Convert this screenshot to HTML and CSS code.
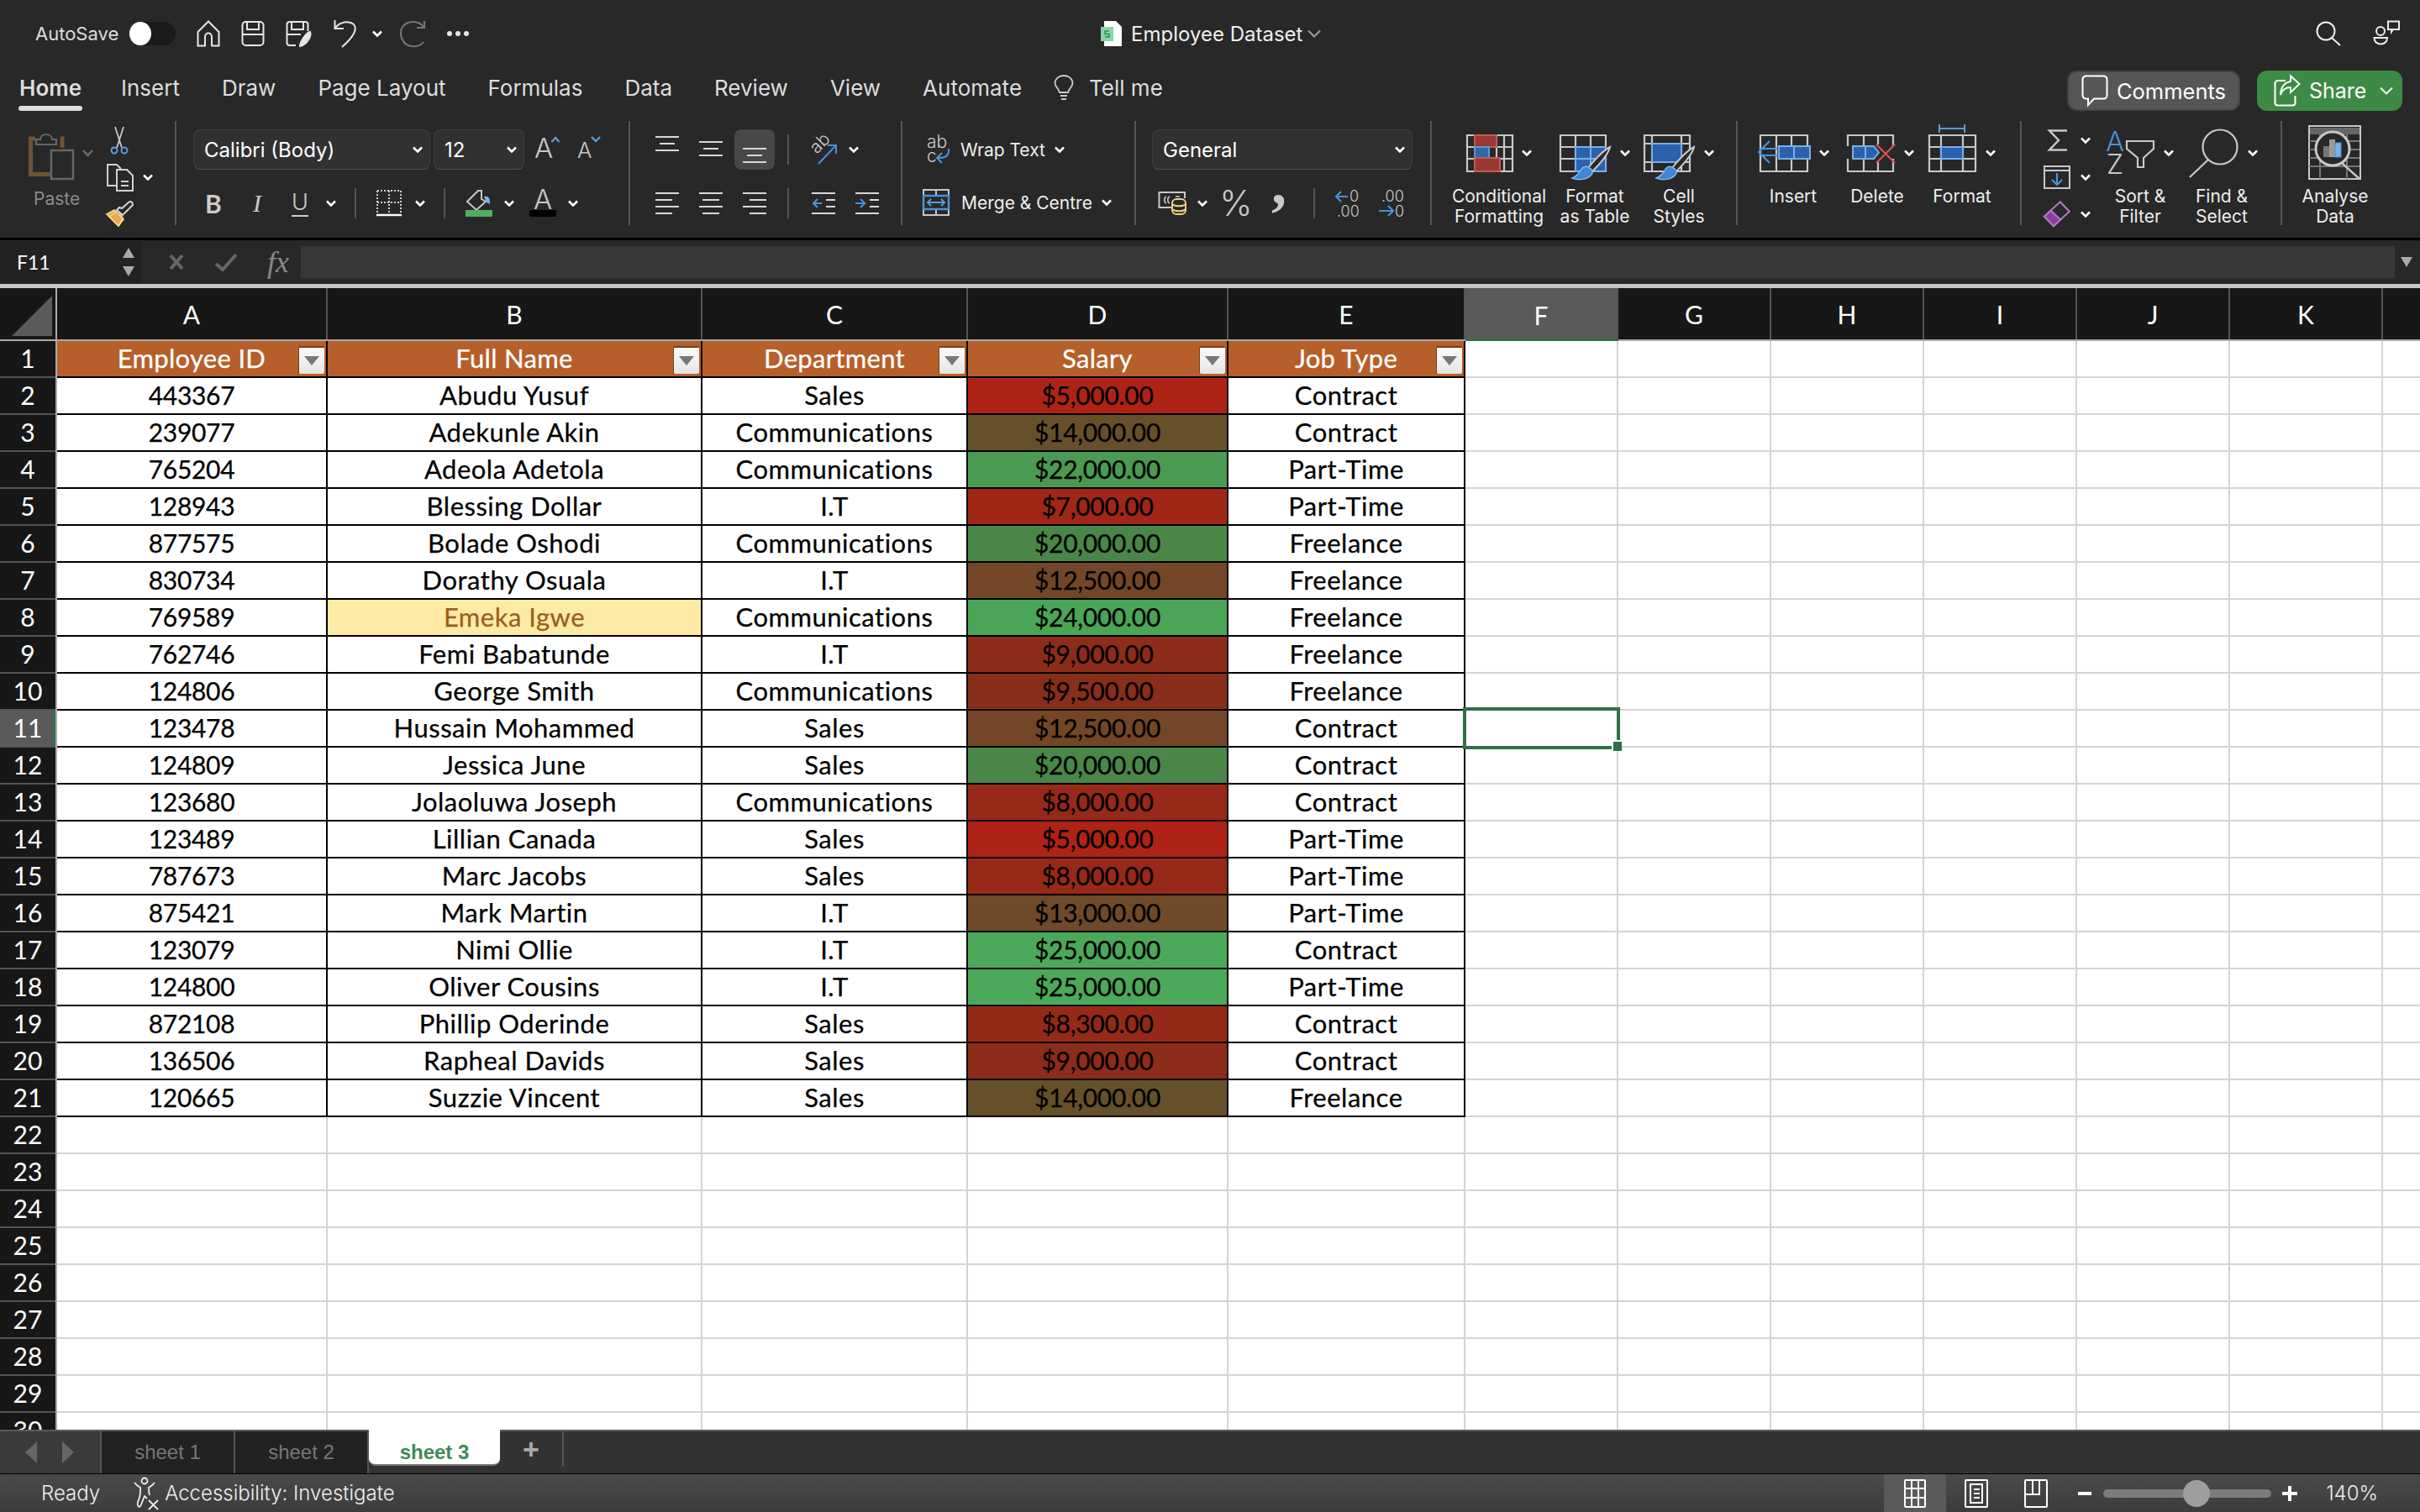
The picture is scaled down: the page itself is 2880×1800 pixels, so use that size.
FILE: index.html
```html
<!DOCTYPE html>
<html lang="en">
<head>
  <meta charset="UTF-8" />
  <title>Employee Dataset</title>
  <link rel="stylesheet" href="styles.css">
</head>
<body>
  <svg class="defs" width="0" height="0">
    <symbol id="chev" viewBox="0 0 12 8"><path d="M1 1.5 6 6.5 11 1.5" fill="none" stroke="#fff" stroke-width="2.6"/></symbol>
    <symbol id="brush" viewBox="0 0 62 72">
      <path d="M60 29C52 33 40 46 34 54L39 58C47 50 58 38 60 29Z" fill="#282828" stroke="#c8c8c8" stroke-width="2"/>
      <path d="M34 53C38 55 41 58 38 62 33 68 22 69 15 66 21 64 23 60 25 57 27 53 31 51 34 53Z" fill="#3f86d4" stroke="#7ab6ee" stroke-width="1.5"/>
    </symbol>
  </svg>

  <!-- title bar -->
  <header class="titlebar">
    <div class="qat">
      <span class="autosave">AutoSave</span>
      <span class="toggle"><span class="knob"></span></span>
      <svg width="28" height="32" viewBox="0 0 28 32" fill="none" stroke="#e6e6e6" stroke-width="2"><path d="M1.5 14 14 1.5 26.500 14V30.500H18V20C18 14 10 14 10 20V30.500H1.500Z"/></svg>
      <svg width="28" height="32" viewBox="0 0 28 32" fill="none" stroke="#e6e6e6" stroke-width="2"><rect x="1.500" y="2" width="25" height="28" rx="4"/><path d="M7 2V11H21V2M1.500 17H26.500"/></svg>
      <svg width="32" height="32" viewBox="0 0 32 32" fill="none" stroke="#e6e6e6" stroke-width="2"><path d="M12 30H5C3 30 1.500 29 1.500 27V5C1.500 3 3 2 5 2H23C25 2 26.500 3 26.500 5V13M7 2V11H21V2M1.500 17H18"/><path d="M17 31C17 26 24 15 29 14 31 18 26 29 17 31Z" fill="#e6e6e6"/></svg>
      <svg width="29" height="34" viewBox="0 0 29 34" fill="none" stroke="#e6e6e6" stroke-width="2"><path d="M1.500 1V11H12M2 10C8 3 18 1 24 6 28 11 26 19 10 33"/></svg>
      <svg class="chev undo-chev" width="12" height="8"><use href="#chev"/></svg>
      <svg class="redo" width="32" height="34" viewBox="0 0 32 34" fill="none" stroke="#777" stroke-width="2"><path d="M30 2V10H21M29 9C23 1 10 1 4 9-1 18 4 31 15 32 20 32.500 26 31 29 27"/></svg>
      <svg class="dots" width="26" height="8" viewBox="0 0 26 8" fill="#e6e6e6"><circle cx="3" cy="4" r="3"/><circle cx="13" cy="4" r="3"/><circle cx="23" cy="4" r="3"/></svg>
    </div>
    <div class="doc">
      <svg width="26" height="30" viewBox="0 0 26 30"><path d="M4 0H18L25 7V30H4Z" fill="#fff"/><rect y="7" width="15" height="17" fill="#86d6a6"/><path d="M10 12H5V15.500H10V19H5" fill="none" stroke="#2f8f5a" stroke-width="1.500"/></svg>
      <span class="doc-name">Employee Dataset</span>
      <svg width="16" height="10" viewBox="0 0 16 10"><path d="M1 1.500 8 8.500 15 1.500" fill="none" stroke="#999" stroke-width="2.200"/></svg>
    </div>
    <div class="title-right">
      <svg width="30" height="30" viewBox="0 0 30 30" fill="none" stroke="#eee" stroke-width="2"><circle cx="12" cy="12" r="10.500"/><path d="M19 20 29 29"/></svg>
      <svg width="32" height="32" viewBox="0 0 32 32" fill="none" stroke="#eee" stroke-width="2"><circle cx="9" cy="13" r="5"/><path d="M1.500 21H17C17 31 1.500 31 1.500 21Z"/><path d="M18 1.500H31V11H24L22 14V11H18Z"/></svg>
    </div>
  </header>

  <!-- ribbon tabs -->
  <nav class="tabs">
    <span class="tab active">Home</span>
    <span class="tab">Insert</span>
    <span class="tab">Draw</span>
    <span class="tab">Page Layout</span>
    <span class="tab">Formulas</span>
    <span class="tab">Data</span>
    <span class="tab">Review</span>
    <span class="tab">View</span>
    <span class="tab">Automate</span>
    <svg class="bulb" width="24" height="32" viewBox="0 0 24 32" fill="none" stroke="#ccc" stroke-width="1.800"><path d="M7 21C5 15 1.500 14 1.500 10 1.500 5 6 1 12 1S22.500 5 22.500 10C22.500 14 19 15 17 21ZM8 25H16M9 29H15"/></svg>
    <span class="tab tell">Tell me</span>
    <button class="btn comments">
      <svg width="32" height="38" viewBox="0 0 32 38" fill="none" stroke="#fff" stroke-width="2"><path d="M6 1.500H26C29 1.500 30.500 3 30.500 6V24C30.500 27 29 28.500 26 28.500H15L8 36V28.500H6C3 28.500 1.500 27 1.500 24V6C1.500 3 3 1.500 6 1.500Z"/></svg>
      Comments
    </button>
    <button class="btn share">
      <svg width="32" height="38" viewBox="0 0 32 38" fill="none" stroke="#fff" stroke-width="2"><path d="M14 7H5C3 7 1.500 8.500 1.500 10V33C1.500 35 3 36.500 5 36.500H22C24 36.500 25.500 35 25.500 33V25"/><path d="M20 1.500 30.500 11 20 21V15C14 15 10 18 8 24 8 15 13 9 20 8Z"/></svg>
      Share
      <svg class="share-chev" width="16" height="10" viewBox="0 0 16 10"><path d="M1 1.500 8 8.500 15 1.500" fill="none" stroke="#fff" stroke-width="1.800"/></svg>
    </button>
  </nav>

  <!-- ribbon -->
  <section class="ribbon">
    <div class="group clipboard">
      <div class="paste">
        <svg width="118" height="62" viewBox="0 0 118 62" fill="none">
          <path d="M42 11H36.500V53.500H60M72 11H74V22" stroke="#6e5434" stroke-width="5"/>
          <path d="M43 18V12H48C48 4 62 4 62 12H67V18Z" stroke="#666" stroke-width="2.200" fill="#282828"/>
          <rect x="61" y="25" width="26" height="34" stroke="#666" stroke-width="2.500"/>
          <path d="M99 25 104.500 31 110 25" stroke="#666" stroke-width="2.600"/>
        </svg>
        <span class="paste-label">Paste</span>
      </div>
      <div class="stack clip-stack">
        <div class="stack-row">
          <svg class="scissors" width="22" height="34" viewBox="0 0 22 34" fill="none"><path d="M6 1 14 26M16 1 8 26" stroke="#c8c8c8" stroke-width="1.800"/><circle cx="5" cy="29" r="3.500" stroke="#5a9bd8" stroke-width="2"/><circle cx="17" cy="29" r="3.500" stroke="#5a9bd8" stroke-width="2"/></svg>
        </div>
        <div class="stack-row">
          <svg width="34" height="34" viewBox="0 0 34 34" fill="none" stroke="#d0d0d0" stroke-width="2"><path d="M12 27H2V2H13L18 7"/><path d="M13 8H25L32 15V33H13ZM18 22H27M18 27H27" /></svg>
          <svg class="chev" width="12" height="8"><use href="#chev"/></svg>
        </div>
        <div class="stack-row">
          <svg width="34" height="32" viewBox="0 0 34 32"><path d="M1 16 15 30 21 22 10 11Z" fill="#e9a94a" stroke="#f3d48c" stroke-width="1.600"/><path d="M4 19 14 12 20 20 15 30Z" fill="none" stroke="#f3d48c" stroke-width="1.500"/><path d="M13 11 20 17 26 11 32 5C32 1 29 0 27 2L19 9 16 8Z" fill="#282828" stroke="#d0d0d0" stroke-width="2"/></svg>
        </div>
      </div>
    </div>

    <div class="group">
      <div class="row font-top">
        <div class="select font-name"><span>Calibri (Body)</span><svg class="chev" width="12" height="8"><use href="#chev"/></svg></div>
        <div class="select font-size"><span>12</span><svg class="chev" width="12" height="8"><use href="#chev"/></svg></div>
        <svg width="36" height="36" viewBox="0 0 36 36"><text x="4" y="28" class="ico-text big-a">A</text><path d="M24.500 9 29 4 33.500 9" fill="none" stroke="#5a9bd8" stroke-width="2.400"/></svg>
        <svg width="36" height="36" viewBox="0 0 36 36"><text x="4" y="28" class="ico-text small-a">A</text><path d="M21 3 26 8 31 3" fill="none" stroke="#5a9bd8" stroke-width="2.400"/></svg>
      </div>
      <div class="row font-bottom">
        <span class="ico-b">B</span>
        <span class="ico-i">I</span>
        <span class="ico-u">U</span>
        <svg class="chev" width="12" height="8"><use href="#chev"/></svg>
        <span class="vsep"></span>
        <svg width="30" height="32" viewBox="0 0 30 32" fill="none" stroke="#d0d0d0" stroke-width="2"><path d="M1 1H29V29M1 1V29M15 1V29M1 15H29" stroke-dasharray="2 2"/><path d="M0 30H30" stroke="#fff" stroke-width="2.500" /></svg>
        <svg class="chev" width="12" height="8"><use href="#chev"/></svg>
        <span class="vsep"></span>
        <svg width="32" height="32" viewBox="0 0 32 32"><path d="M2 14 13 3 15 1H19V11L24 14 13 24Z" fill="none" stroke="#c8c8c8" stroke-width="2"/><path d="M22 8C27 7 29 9 29 17L25 15Z" fill="#7ab6ee"/><rect y="24" width="32" height="8" fill="#4fae5f"/></svg>
        <svg class="chev" width="12" height="8"><use href="#chev"/></svg>
        <svg width="32" height="32" viewBox="0 0 32 32"><text x="5" y="23" class="ico-text big-a">A</text><rect y="24" width="32" height="8" fill="#000"/></svg>
        <svg class="chev" width="12" height="8"><use href="#chev"/></svg>
      </div>
    </div>

    <div class="group">
      <div class="row align-top">
        <svg width="28" height="36" viewBox="0 0 28 36" class="lines"><path d="M0 3H28M5 11H23M0 19H28"/></svg>
        <svg width="28" height="36" viewBox="0 0 28 36" class="lines"><path d="M0 9H28M5 17H23M0 25H28"/></svg>
        <span class="pressed"><svg width="28" height="36" viewBox="0 0 28 36" class="lines"><path d="M0 17H28M5 25H23M0 33H28"/></svg></span>
        <span class="vsep"></span>
        <svg width="34" height="36" viewBox="0 0 34 36"><text x="0" y="0" class="ico-text rot-ab" transform="translate(9 24) rotate(-45)">ab</text><path d="M11 35 32 13M22 13H32V23" fill="none" stroke="#4a90d9" stroke-width="2"/></svg>
        <svg class="chev" width="12" height="8"><use href="#chev"/></svg>
      </div>
      <div class="row align-bottom">
        <svg width="28" height="34" viewBox="0 0 28 34" class="lines"><path d="M0 5H28M0 13H20M0 21H28M0 29H20"/></svg>
        <svg width="28" height="34" viewBox="0 0 28 34" class="lines"><path d="M0 5H28M4 13H24M0 21H28M4 29H24"/></svg>
        <svg width="28" height="34" viewBox="0 0 28 34" class="lines"><path d="M0 5H28M8 13H28M0 21H28M8 29H28"/></svg>
        <span class="vsep"></span>
        <svg width="28" height="34" viewBox="0 0 28 34"><path class="stroke-lines" d="M0 5H28M17 13H28M17 21H28M0 29H28"/><path d="M12 17H2M7 12 2 17 7 22" fill="none" stroke="#4a90d9" stroke-width="2.200"/></svg>
        <svg width="28" height="34" viewBox="0 0 28 34"><path class="stroke-lines" d="M0 5H28M17 13H28M17 21H28M0 29H28"/><path d="M0 17H11M6 12 11 17 6 22" fill="none" stroke="#4a90d9" stroke-width="2.200"/></svg>
      </div>
    </div>

    <div class="group">
      <div class="row wrap-row">
        <svg class="wrap-ico" width="28" height="36" viewBox="0 0 28 36"><text x="0" y="16" class="ico-text abc">ab</text><text x="0" y="33" class="ico-text abc">c</text><path d="M26 17C27 27 20 28 13 28M18 22 12 28 18 34" fill="none" stroke="#4a90d9" stroke-width="2.200"/></svg>
        <span class="cmd-text">Wrap Text</span>
        <svg class="chev" width="12" height="8"><use href="#chev"/></svg>
      </div>
      <div class="row wrap-row merge-row">
        <svg width="32" height="32" viewBox="0 0 32 32" fill="none"><path d="M1 1H31V31H1ZM16 1V31" stroke="#c8c8c8" stroke-width="2"/><rect x="1" y="8" width="30" height="16" fill="#282828" stroke="#4a90d9" stroke-width="2.500"/><path d="M6 16H26M10 12 6 16 10 20M22 12 26 16 22 20" stroke="#5a9bd8" stroke-width="2"/></svg>
        <span class="cmd-text">Merge &amp; Centre</span>
        <svg class="chev" width="12" height="8"><use href="#chev"/></svg>
      </div>
    </div>

    <div class="group">
      <div class="row number-top">
        <div class="select number-format"><span>General</span><svg class="chev" width="12" height="8"><use href="#chev"/></svg></div>
      </div>
      <div class="row number-bottom">
        <svg width="34" height="30" viewBox="0 0 34 30" fill="none"><path d="M24 20H1.500V2H32V9" stroke="#c8c8c8" stroke-width="2"/><path d="M10 7C7 8 7 14 10 15M14 7C11 8 11 14 14 15M21 7H26" stroke="#c8c8c8" stroke-width="1.600"/><rect x="17" y="10" width="16" height="18" rx="5" fill="#282828" stroke="#efcf7c" stroke-width="2"/><path d="M17 16C20 19 30 19 33 16M17 22C20 25 30 25 33 22" stroke="#efcf7c" stroke-width="2"/></svg>
        <svg class="chev" width="12" height="8"><use href="#chev"/></svg>
        <span class="ico-pct">%</span>
        <svg width="20" height="34" viewBox="0 0 20 34"><text x="-1" y="18" class="ico-comma">,</text></svg>
        <span class="vsep"></span>
        <svg width="32" height="34" viewBox="0 0 32 34"><path d="M15 9H1M7 3 1 9 7 15" fill="none" stroke="#4a90d9" stroke-width="2.200"/><text x="17" y="15" class="ico-text dec">0</text><text x="2" y="33" class="ico-text dec">.00</text></svg>
        <svg width="32" height="34" viewBox="0 0 32 34"><text x="2" y="15" class="ico-text dec">.00</text><path d="M-1 26H16M10 20 16 26 10 32" fill="none" stroke="#4a90d9" stroke-width="2.200"/><text x="18" y="33" class="ico-text dec">0</text></svg>
      </div>
    </div>

    <div class="group tiles styles-group">
      <div class="tile conditional">
        <div class="tile-ico">
          <svg width="56" height="72" viewBox="0 0 56 72" fill="none">
            <path d="M1 15H55V58H1ZM36 15V58M45 15V58M1 29H55M1 43H55" stroke="#c8c8c8" stroke-width="2.200"/>
            <rect x="10" y="15" width="26" height="14" fill="#9b3833" stroke="#c45a55" stroke-width="2"/>
            <rect x="10" y="29" width="17" height="13" fill="#2f6aa8" stroke="#5a9bd8" stroke-width="2"/>
            <rect x="10" y="42" width="30" height="16" fill="#9b3833" stroke="#c45a55" stroke-width="2"/>
          </svg>
          <svg class="chev" width="12" height="8"><use href="#chev"/></svg>
        </div>
        <span class="tile-label">Conditional<br>Formatting</span>
      </div>
      <div class="tile as-table">
        <div class="tile-ico">
          <svg width="62" height="72" viewBox="0 0 62 72" fill="none">
            <path d="M1 15H55V58H1ZM19 15V58M37 15V58M1 29H55M1 43H55" stroke="#c8c8c8" stroke-width="2.200"/>
            <rect x="19" y="29" width="36" height="29" fill="#2b62ab" stroke="#76b0e8" stroke-width="2"/>
            <path d="M37 29V58M19 43H55" stroke="#76b0e8" stroke-width="2"/>
            <use href="#brush"/>
          </svg>
          <svg class="chev" width="12" height="8"><use href="#chev"/></svg>
        </div>
        <span class="tile-label">Format<br>as Table</span>
      </div>
      <div class="tile cell-styles">
        <div class="tile-ico">
          <svg width="62" height="72" viewBox="0 0 62 72" fill="none">
            <path d="M1 15H55V58H1ZM10 15V58M45 15V58M1 25H55M1 47H55" stroke="#c8c8c8" stroke-width="2.200"/>
            <rect x="10" y="25" width="35" height="22" fill="#2b62ab" stroke="#76b0e8" stroke-width="2"/>
            <use href="#brush"/>
          </svg>
          <svg class="chev" width="12" height="8"><use href="#chev"/></svg>
        </div>
        <span class="tile-label">Cell<br>Styles</span>
      </div>
    </div>

    <div class="group tiles cells-group">
      <div class="tile insert">
        <div class="tile-ico">
          <svg width="64" height="72" viewBox="0 0 64 72" fill="none">
            <path d="M4 15H60V58H4ZM23 15V58M41 15V58" stroke="#c8c8c8" stroke-width="2.200"/>
            <rect x="26" y="28" width="37" height="15" fill="#2b62ab" stroke="#76b0e8" stroke-width="2"/>
            <path d="M44 28V43" stroke="#76b0e8" stroke-width="2"/>
            <path d="M15 22 2 35 15 48M4 31H26M4 39H26" stroke="#4a90d9" stroke-width="2.200"/>
          </svg>
          <svg class="chev" width="12" height="8"><use href="#chev"/></svg>
        </div>
        <span class="tile-label">Insert</span>
      </div>
      <div class="tile delete">
        <div class="tile-ico">
          <svg width="58" height="72" viewBox="0 0 58 72" fill="none">
            <path d="M1 28V15H55V28M1 43V58H55V43M20 15V28M20 43V58M37 15V26M37 47V58" stroke="#c8c8c8" stroke-width="2.200"/>
            <path d="M7 28H32L38 35.500 32 43H7Z" fill="#2b62ab" stroke="#76b0e8" stroke-width="2"/>
            <path d="M22 28V43" stroke="#76b0e8" stroke-width="2"/>
            <path d="M35 26 57 48M57 26 35 48" stroke="#d9534f" stroke-width="2.200"/>
          </svg>
          <svg class="chev" width="12" height="8"><use href="#chev"/></svg>
        </div>
        <span class="tile-label">Delete</span>
      </div>
      <div class="tile format">
        <div class="tile-ico">
          <svg width="58" height="72" viewBox="0 0 58 72" fill="none">
            <path d="M1 15H56V58H1ZM15 15V58M41 15V58M1 29H56M1 43H56" stroke="#c8c8c8" stroke-width="2.200"/>
            <rect x="15" y="29" width="26" height="14" fill="#2b62ab" stroke="#76b0e8" stroke-width="2"/>
            <path d="M13 7H43M13 2V12M43 2V12" stroke="#5a9bd8" stroke-width="2"/>
          </svg>
          <svg class="chev" width="12" height="8"><use href="#chev"/></svg>
        </div>
        <span class="tile-label">Format</span>
      </div>
    </div>

    <div class="group tiles editing-group">
      <div class="stack edit-stack">
        <div class="stack-row">
          <svg class="sigma" width="24" height="28" viewBox="0 0 24 28"><path d="M24 2.500H3L14 14 3 25.500H24" fill="none" stroke="#c8c8c8" stroke-width="2.500"/></svg>
          <svg class="chev" width="12" height="8"><use href="#chev"/></svg>
        </div>
        <div class="stack-row">
          <svg width="32" height="28" viewBox="0 0 32 28" fill="none"><path d="M1 1H31V27H1ZM1 6H31" stroke="#c8c8c8" stroke-width="2"/><path d="M16 9V23M10 17 16 23 22 17" stroke="#4a90d9" stroke-width="2.200"/></svg>
          <svg class="chev" width="12" height="8"><use href="#chev"/></svg>
        </div>
        <div class="stack-row">
          <svg width="32" height="32" viewBox="0 0 32 32"><path d="M1 18.700 8 11 19.700 22 12 30.300Z" fill="#8a3fa0"/><path d="M19.700 1.300 30.700 12.700 12 30.300 .7 18.700ZM8 11 19.700 22" fill="none" stroke="#b57bc9" stroke-width="2"/></svg>
          <svg class="chev" width="12" height="8"><use href="#chev"/></svg>
        </div>
      </div>
      <div class="tile sort">
        <div class="tile-ico">
          <svg width="58" height="72" viewBox="0 0 58 72" fill="none">
            <text x="-1" y="34" class="ico-text sort-a">A</text>
            <text x="0" y="61" class="ico-text sort-z">Z</text>
            <path d="M24 22H56V31L44 42V53H37V42L24 31Z" stroke="#c8c8c8" stroke-width="2.200"/>
          </svg>
          <svg class="chev" width="12" height="8"><use href="#chev"/></svg>
        </div>
        <span class="tile-label">Sort &amp;<br>Filter</span>
      </div>
      <div class="tile find">
        <div class="tile-ico">
          <svg width="60" height="72" viewBox="0 0 60 72" fill="none" stroke="#c8c8c8" stroke-width="2.200"><circle cx="37" cy="29" r="20.500"/><path d="M23 44 1 65"/></svg>
          <svg class="chev" width="12" height="8"><use href="#chev"/></svg>
        </div>
        <span class="tile-label">Find &amp;<br>Select</span>
      </div>
    </div>

    <div class="group tiles last-group">
      <div class="tile analyse">
        <div class="tile-ico">
          <svg width="64" height="72" viewBox="0 0 64 72" fill="none">
            <rect x="1" y="4" width="61" height="63" stroke="#c8c8c8" stroke-width="2"/>
            <rect x="2" y="6" width="59" height="8" fill="#666"/>
            <path d="M1 22H61M1 32H61M1 42H61M1 52H61M14 14V67M46 14V67" stroke="#777" stroke-width="2"/>
            <circle cx="29" cy="31" r="20" fill="#282828" stroke="#c8c8c8" stroke-width="3"/>
            <path d="M40 48 61 67" stroke="#c8c8c8" stroke-width="2.500"/>
            <rect x="18" y="28" width="7" height="13" fill="#777"/>
            <rect x="25" y="20" width="7" height="21" fill="#9a9a9a"/>
            <rect x="32" y="24" width="7" height="17" fill="#76b0e8" stroke="#4a90d9"/>
          </svg>
        </div>
        <span class="tile-label">Analyse<br>Data</span>
      </div>
    </div>
  </section>

  <!-- formula bar -->
  <section class="formula">
    <div class="namebox">
      <span>F11</span>
      <div class="stepper">
        <svg width="14" height="12" viewBox="0 0 14 12"><path d="M7 0 14 12H0Z" fill="#aaa"/></svg>
        <svg width="14" height="12" viewBox="0 0 14 12"><path d="M7 12 14 0H0Z" fill="#aaa"/></svg>
      </div>
    </div>
    <svg class="fx-x" width="18" height="20" viewBox="0 0 18 20"><path d="M2 2 16 18M16 2 2 18" stroke="#666" stroke-width="4"/></svg>
    <svg class="fx-check" width="28" height="22" viewBox="0 0 28 22"><path d="M2 13 10 20 26 2" fill="none" stroke="#666" stroke-width="4"/></svg>
    <span class="fx">fx</span>
    <div class="formula-input"></div>
    <svg class="fx-more" width="14" height="12" viewBox="0 0 14 12"><path d="M7 12 14 0H0Z" fill="#aaa"/></svg>
  </section>

  <!-- sheet -->
  <main class="grid-wrap">
    <div class="col-heads">
      <div class="corner"><svg width="48" height="48" viewBox="0 0 48 48"><path d="M48 0V48H0Z" fill="#5a5a5a"/></svg></div>
      <div class="col-head a">A</div>
      <div class="col-head b">B</div>
      <div class="col-head c">C</div>
      <div class="col-head d">D</div>
      <div class="col-head e">E</div>
      <div class="col-head f current">F</div>
      <div class="col-head f">G</div>
      <div class="col-head f">H</div>
      <div class="col-head f">I</div>
      <div class="col-head f">J</div>
      <div class="col-head f">K</div>
      <div class="col-head rest"></div>
    </div>
    <div class="sheet-body">
      <div class="row-heads">
        <div>1</div><div>2</div><div>3</div><div>4</div><div>5</div><div>6</div><div>7</div><div>8</div><div>9</div><div>10</div>
        <div class="current">11</div><div>12</div><div>13</div><div>14</div><div>15</div><div>16</div><div>17</div><div>18</div><div>19</div><div>20</div>
        <div>21</div><div>22</div><div>23</div><div>24</div><div>25</div><div>26</div><div>27</div><div>28</div><div>29</div><div>30</div>
      </div>
      <div class="cells">
        <div class="data-table">
          <div class="th">Employee ID<span class="filter"></span></div><div class="th">Full Name<span class="filter"></span></div><div class="th">Department<span class="filter"></span></div><div class="th">Salary<span class="filter"></span></div><div class="th">Job Type<span class="filter"></span></div>

          <div>443367</div><div>Abudu Yusuf</div><div>Sales</div><div style="background:#ae2315">$5,000.00</div><div>Contract</div>
          <div>239077</div><div>Adekunle Akin</div><div>Communications</div><div style="background:#65502a">$14,000.00</div><div>Contract</div>
          <div>765204</div><div>Adeola Adetola</div><div>Communications</div><div style="background:#4a9a51">$22,000.00</div><div>Part-Time</div>
          <div>128943</div><div>Blessing Dollar</div><div>I.T</div><div style="background:#a02616">$7,000.00</div><div>Part-Time</div>
          <div>877575</div><div>Bolade Oshodi</div><div>Communications</div><div style="background:#4a8648">$20,000.00</div><div>Freelance</div>
          <div>830734</div><div>Dorathy Osuala</div><div>I.T</div><div style="background:#724626">$12,500.00</div><div>Freelance</div>
          <div>769589</div><div class="dup">Emeka Igwe</div><div>Communications</div><div style="background:#4aa557">$24,000.00</div><div>Freelance</div>
          <div>762746</div><div>Femi Babatunde</div><div>I.T</div><div style="background:#8c2c19">$9,000.00</div><div>Freelance</div>
          <div>124806</div><div>George Smith</div><div>Communications</div><div style="background:#882e1a">$9,500.00</div><div>Freelance</div>
          <div>123478</div><div>Hussain Mohammed</div><div>Sales</div><div style="background:#724626">$12,500.00</div><div>Contract</div>
          <div>124809</div><div>Jessica June</div><div>Sales</div><div style="background:#4a8648">$20,000.00</div><div>Contract</div>
          <div>123680</div><div>Jolaoluwa Joseph</div><div>Communications</div><div style="background:#982817">$8,000.00</div><div>Contract</div>
          <div>123489</div><div>Lillian Canada</div><div>Sales</div><div style="background:#ae2315">$5,000.00</div><div>Part-Time</div>
          <div>787673</div><div>Marc Jacobs</div><div>Sales</div><div style="background:#982817">$8,000.00</div><div>Part-Time</div>
          <div>875421</div><div>Mark Martin</div><div>I.T</div><div style="background:#6e4a28">$13,000.00</div><div>Part-Time</div>
          <div>123079</div><div>Nimi Ollie</div><div>I.T</div><div style="background:#4ca95a">$25,000.00</div><div>Contract</div>
          <div>124800</div><div>Oliver Cousins</div><div>I.T</div><div style="background:#4ca95a">$25,000.00</div><div>Part-Time</div>
          <div>872108</div><div>Phillip Oderinde</div><div>Sales</div><div style="background:#962818">$8,300.00</div><div>Contract</div>
          <div>136506</div><div>Rapheal Davids</div><div>Sales</div><div style="background:#8c2c19">$9,000.00</div><div>Contract</div>
          <div>120665</div><div>Suzzie Vincent</div><div>Sales</div><div style="background:#65502a">$14,000.00</div><div>Freelance</div>
        </div>
        <div class="selection"><span class="handle"></span></div>
      </div>
    </div>
  </main>

  <!-- sheet tabs -->
  <footer>
    <div class="sheetbar">
      <div class="sheet-nav">
        <svg width="14" height="26" viewBox="0 0 14 26"><path d="M14 0V26L0 13Z" fill="#666"/></svg>
        <svg width="14" height="26" viewBox="0 0 14 26"><path d="M0 0V26L14 13Z" fill="#666"/></svg>
      </div>
      <div class="sheet-tab">sheet 1</div>
      <div class="sheet-tab">sheet 2</div>
      <div class="sheet-tab active">sheet 3</div>
      <div class="sheet-add">+</div>
    </div>
    <div class="statusbar">
      <span class="ready">Ready</span>
      <svg class="a11y" width="30" height="40" viewBox="0 0 30 40" fill="none" stroke="#eee" stroke-width="1.800"><circle cx="13" cy="5" r="3.500"/><path d="M1 7C5 12 7 12 8 13 8 20 8 24 5 30 4 36 7 38 9 33L13 23 16 26M25 7C21 12 19 12 18 13 18 16 18 19 19 22M18 28 29 39M29 28 18 39"/></svg>
      <span class="a11y-text">Accessibility: Investigate</span>
      <div class="status-right">
        <span class="view-btn on"><svg width="26" height="34" viewBox="0 0 26 34" fill="none" stroke="#fff" stroke-width="2"><rect x="1" y="1" width="24" height="32" rx="1"/><path d="M9 1V33M17 1V33M1 11H25M1 22H25"/></svg></span>
        <span class="view-btn"><svg width="28" height="34" viewBox="0 0 28 34" fill="none" stroke="#fff" stroke-width="2"><rect x="1" y="1" width="26" height="32" rx="1"/><path d="M7 6H21V28H7ZM11 12H18M11 17H18M11 22H18"/></svg></span>
        <span class="view-btn"><svg width="28" height="34" viewBox="0 0 28 34" fill="none" stroke="#fff" stroke-width="2"><rect x="1" y="1" width="26" height="32" rx="1"/><path d="M1 18H18V1M10 1V18"/></svg></span>
        <svg class="zoom-minus" width="16" height="4" viewBox="0 0 16 4"><rect width="16" height="4" fill="#fff"/></svg>
        <div class="slider"><span class="thumb"></span></div>
        <svg class="zoom-plus" width="18" height="18" viewBox="0 0 18 18"><path d="M9 0V18M0 9H18" stroke="#fff" stroke-width="4"/></svg>
        <span class="zoom-pct">140%</span>
      </div>
    </div>
  </footer>
</body>
</html>
```

FILE: styles.css
```css
* {
  box-sizing: border-box;
}

body {
  margin: 0;
  width: 2880px;
  height: 1800px;
  overflow: hidden;
  background: #282828;
  color: #fff;
  font-family: Inter, "Liberation Sans", sans-serif;
  display: flex;
  flex-direction: column;
}

svg {
  display: block;
  flex: none;
  overflow: visible;
}

.defs {
  position: absolute;
}

/* title bar */
.titlebar {
  height: 70px;
  padding-top: 10px;
  display: flex;
  align-items: center;
}

.qat {
  width: 1310px;
  padding-left: 42px;
  display: flex;
  align-items: center;
  gap: 25px;
}

.autosave {
  font-size: 22px;
  color: #ddd;
  margin-right: -12px;
}

.toggle {
  width: 55px;
  height: 28px;
  border-radius: 14px;
  background: #1a1a1a;
  display: flex;
}

.knob {
  width: 26px;
  height: 28px;
  border-radius: 50%;
  background: #fff;
}

.undo-chev {
  margin-left: -8px;
}

.redo {
  margin-left: -5px;
}

.doc {
  display: flex;
  align-items: center;
}

.doc-name {
  font-size: 24px;
  color: #eee;
  margin: 0 6px 0 10px;
}

.title-right {
  margin-left: auto;
  padding-right: 24px;
  display: flex;
  align-items: center;
  gap: 38px;
}

/* tabs */
.tabs {
  height: 70px;
  padding-left: 23px;
  padding-right: 21px;
  display: flex;
  align-items: center;
  gap: 50px;
}

.tab {
  font-size: 26px;
  color: #ddd;
  padding-bottom: 2px;
}

.tab.active {
  font-weight: 600;
  position: relative;
  margin-right: -3px;
}

.tab.active::after {
  content: "";
  position: absolute;
  left: -1px;
  right: -1px;
  bottom: -10px;
  height: 6px;
  border-radius: 3px;
  background: #ddd;
}

.bulb {
  margin-left: -12px;
}

.tell {
  margin-left: -32px;
}

.btn {
  height: 48px;
  margin-top: 6px;
  border-radius: 12px;
  color: #fff;
  font: 25.5px Inter, "Liberation Sans", sans-serif;
  display: flex;
  align-items: center;
  padding: 0;
}

.comments {
  margin-left: auto;
  width: 206px;
  justify-content: center;
  gap: 10px;
  background: #565656;
  border: 2px solid #444;
}

.share {
  margin-left: -30px;
  width: 173px;
  padding-left: 20px;
  gap: 10px;
  background: #3d8a46;
  border: none;
  font-size: 25px;
}

.share-chev {
  margin-left: 6px;
}

/* ribbon */
.ribbon {
  height: 146px;
  padding-top: 4px;
  display: flex;
  align-items: flex-start;
  border-bottom: 3px solid #000;
}

.group {
  width: 540px;
  height: 124px;
  padding-top: 10px;
  border-right: 2px solid #555;
  display: flex;
  flex-direction: column;
  gap: 22px;
}

.group:nth-child(1) { width: 210px; }
.group:nth-child(3) { width: 324px; }
.group:nth-child(4) { width: 278px; }
.group:nth-child(5) { width: 352px; }
.group:nth-child(6) { width: 364px; }
.group:nth-child(7) { width: 338px; }
.group:nth-child(8) { width: 310px; }
.group:nth-child(9) { width: 164px; border-right: none; }

.row {
  display: grid;
  align-items: center;
  justify-items: center;
}

.row:first-child {
  height: 48px;
}

.row + .row {
  height: 34px;
}

.vsep {
  width: 2px;
  height: 36px;
  background: #555;
}

.select {
  height: 48px;
  display: flex;
  align-items: center;
  justify-content: space-between;
  padding: 0 8px 0 12px;
  background: #313131;
  border: 1.5px solid #3e3e3e;
  border-bottom-color: #505050;
  border-radius: 8px;
  font-size: 24px;
}

.font-top {
  padding-left: 20px;
  grid-template-columns: 286px 108px 52px 50px;
}

.font-name {
  width: 282px;
  justify-self: start;
}

.font-size {
  width: 108px;
}

.font-bottom {
  padding-left: 18px;
  grid-template-columns: 52px 52px 50px 24px 34px 46px 28px 30px 52px 20px 60px 12px;
}

.ico-b {
  font: bold 30px Lato, sans-serif;
  color: #ccc;
}

.ico-i {
  font: italic 30px "Liberation Serif", serif;
  color: #ccc;
}

.ico-u {
  font: 300 27px Inter, sans-serif;
  color: #ccc;
  border-bottom: 2px solid #ccc;
  line-height: 30px;
}

.ico-text {
  font-family: Inter, "Liberation Sans", sans-serif;
  font-weight: 300;
  fill: #c8c8c8;
}

.big-a { font-size: 33px; }
.small-a { font-size: 26px; }
.rot-ab { font-size: 21px; }
.abc { font-size: 21px; }
.dec { font-size: 18px; }
.sort-a { font-size: 33px; fill: #4a90d9; }
.sort-z { font-size: 32px; }

.ico-pct {
  font-size: 42px;
  font-weight: 300;
  line-height: 34px;
  color: #c8c8c8;
}

.ico-comma {
  font: bold 72px "Liberation Serif", serif;
  fill: #c8c8c8;
}

.lines path,
.stroke-lines {
  fill: none;
  stroke: #d8d8d8;
  stroke-width: 2;
}

.align-top {
  padding-left: 18px;
  grid-template-columns: 52px 52px 52px 28px 56px 16px;
}

.align-bottom {
  padding-left: 18px;
  grid-template-columns: 52px 52px 52px 28px 56px 48px;
}

.pressed {
  width: 48px;
  height: 48px;
  border-radius: 8px;
  background: #484848;
  display: flex;
  align-items: center;
  justify-content: center;
}

.wrap-row {
  display: flex;
  padding-left: 29px;
}

.merge-row {
  padding-left: 24px;
}

.wrap-ico {
  margin-right: 12px;
}

.merge-row svg:first-child {
  margin-right: 14px;
}

.cmd-text {
  font-size: 21px;
  color: #eee;
  margin-right: 11px;
}

.number-top {
  padding-left: 19px;
  grid-template-columns: 310px;
}

.number-format {
  width: 310px;
}

.number-bottom {
  padding-left: 20px;
  grid-template-columns: 46px 26px 54px 52px 28px 54px 52px;
}

/* large icon + label buttons */
.tiles {
  flex-direction: row;
  gap: 0;
}

.tile {
  margin-top: -8px;
  display: flex;
  flex-direction: column;
  align-items: center;
}

.tile-ico {
  height: 72px;
  display: flex;
  align-items: center;
  justify-content: center;
  gap: 10px;
  width: 100%;
}

.tile-label {
  margin-top: 4px;
  font-size: 21px;
  line-height: 24px;
  text-align: center;
  color: #eee;
}

.styles-group { padding-left: 21px; }
.conditional { width: 118px; }
.as-table { width: 110px; }
.cell-styles { width: 90px; }

.cells-group { padding-left: 16px; }
.insert { width: 100px; }
.delete { width: 100px; }
.delete .tile-ico { padding-left: 8px; }
.format { width: 102px; }

.sort { width: 98px; }
.find { width: 100px; }
.find .tile-label { margin-right: 4px; }

.last-group .tile { width: 126px; }

/* small stacked commands */
.stack {
  margin-top: -9px;
  flex: none;
}

.stack-row {
  height: 44px;
  display: flex;
  align-items: center;
  justify-content: space-between;
}

.clipboard {
  flex-direction: row;
  gap: 0;
}

.paste {
  width: 118px;
  flex: none;
}

.paste-label {
  display: block;
  margin-top: 8px;
  padding-left: 40px;
  font-size: 21px;
  color: #8a8a8a;
}

.clip-stack {
  width: 56px;
  margin-left: 8px;
}

.scissors {
  margin-left: 5px;
}

.edit-stack {
  width: 56px;
  margin-left: 26px;
  margin-right: 10px;
}

.sigma {
  margin-left: 4px;
}

/* formula bar */
.formula {
  height: 57px;
  display: flex;
  align-items: center;
  border-bottom: 5px solid #c8c8c8;
}

.namebox {
  width: 168px;
  height: 50px;
  background: #222;
  padding: 0 8px 0 20px;
  display: flex;
  align-items: center;
  justify-content: space-between;
  font: 23px Lato, sans-serif;
}

.stepper {
  display: flex;
  flex-direction: column;
  gap: 10px;
}

.fx-x {
  margin-left: 33px;
}

.fx-check {
  margin-left: 36px;
}

.fx {
  margin-left: 35px;
  width: 40px;
  font: italic 36px "Liberation Serif", serif;
  color: #888;
}

.formula-input {
  flex: 1;
  height: 38px;
  background: #383838;
}

.fx-more {
  margin: 0 9px 0 7px;
}

/* sheet */
.grid-wrap {
  height: 1359px;
  overflow: hidden;
  background: #fff;
  font: 30px Lato, "Liberation Sans", sans-serif;
}

.col-heads {
  height: 63px;
  display: flex;
  background: #171717;
  border-bottom: 2px solid #aaa;
}

.corner {
  width: 68px;
  flex: none;
  padding: 9px 0 0 14px;
  border-right: 2px solid #aaa;
}

.col-head {
  flex: none;
  display: flex;
  align-items: center;
  justify-content: center;
  border-right: 2px solid #555;
  color: #fff;
}

.col-head.a { width: 322px; }
.col-head.b { width: 446px; }
.col-head.c { width: 316px; }
.col-head.d { width: 310px; }
.col-head.e { width: 282px; }
.col-head.f { width: 182px; }
.col-head.rest { flex: 1; border-right: none; }

.col-head.current {
  background: #5a5a5a;
  box-shadow: inset 0 -3px 0 #2f7048;
  margin-bottom: -2px;
}

.sheet-body {
  display: flex;
}

.row-heads {
  width: 68px;
  flex: none;
  background: #171717;
  border-right: 2px solid #aaa;
}

.row-heads div {
  height: 44px;
  padding-bottom: 2px;
  display: flex;
  align-items: center;
  justify-content: center;
  border-bottom: 2px solid #555;
}

.row-heads div.current {
  background: #5a5a5a;
  box-shadow: inset -3px 0 0 #2f7048;
}

.cells {
  flex: 1;
  position: relative;
  height: 1320px;
  color: #000;
  background-color: #fff;
  background-image:
    repeating-linear-gradient(to bottom, transparent 0 42px, #d4d4d4 42px 44px),
    linear-gradient(#d4d4d4, #d4d4d4), linear-gradient(#d4d4d4, #d4d4d4),
    linear-gradient(#d4d4d4, #d4d4d4), linear-gradient(#d4d4d4, #d4d4d4),
    linear-gradient(#d4d4d4, #d4d4d4), linear-gradient(#d4d4d4, #d4d4d4),
    linear-gradient(#d4d4d4, #d4d4d4), linear-gradient(#d4d4d4, #d4d4d4),
    linear-gradient(#d4d4d4, #d4d4d4), linear-gradient(#d4d4d4, #d4d4d4),
    linear-gradient(#d4d4d4, #d4d4d4);
  background-size: 100% 100%, 2px 100%, 2px 100%, 2px 100%, 2px 100%, 2px 100%, 2px 100%, 2px 100%, 2px 100%, 2px 100%, 2px 100%, 2px 100%;
  background-position: 0 0, 320px 0, 766px 0, 1082px 0, 1392px 0, 1674px 0, 1856px 0, 2038px 0, 2220px 0, 2402px 0, 2584px 0, 2766px 0;
  background-repeat: no-repeat;
}

.data-table {
  width: 1676px;
  display: grid;
  grid-template-columns: 322px 446px 316px 310px 282px;
  grid-auto-rows: 44px;
  font-size: 31px;
  letter-spacing: 0.5px;
  -webkit-text-stroke: 0.25px;
}

.data-table div {
  display: flex;
  align-items: center;
  justify-content: center;
  padding-bottom: 3px;
  background: #fff;
  border-right: 2px solid #000;
  border-bottom: 2px solid #000;
}

/* columns A and D hold figures, Lato's digits run wider than the letters */
.data-table div:nth-child(5n+1):not(.th),
.data-table div:nth-child(5n+4):not(.th) {
  font-size: 30px;
  letter-spacing: -0.3px;
}

.data-table .th {
  background: #b65f2a;
  color: #fff;
  letter-spacing: 0.3px;
  position: relative;
}

.filter {
  position: absolute;
  top: 6px;
  right: 2px;
  width: 31px;
  height: 33px;
  background: linear-gradient(#fafafa, #e6e6e6);
  border-top: 2px solid #7a3d18;
  border-left: 1px solid #7a3d18;
  border-radius: 2px;
  display: flex;
  align-items: center;
  justify-content: center;
}

.filter::after {
  content: "";
  border-left: 9px solid transparent;
  border-right: 9px solid transparent;
  border-top: 11px solid #777;
}

.data-table .dup {
  background: #fdeba5;
  color: #9c5d1c;
}

.selection {
  position: absolute;
  left: 1673px;
  top: 436px;
  width: 187px;
  height: 50px;
  border: 4px solid #2f7048;
}

.handle {
  position: absolute;
  right: -6px;
  bottom: -6px;
  width: 12px;
  height: 13px;
  background: #2f7048;
  border-left: 2px solid #fff;
  border-top: 2px solid #fff;
}

/* sheet tabs and status bar */
.sheetbar {
  height: 53px;
  display: flex;
  background: #333;
  border-top: 2px solid #5a5a5a;
  border-bottom: 1px solid #000;
}

.sheet-nav {
  width: 121px;
  padding: 0 31px 0 30px;
  display: flex;
  align-items: center;
  justify-content: space-between;
  background: #3a3a3a;
  border-right: 2px solid #555;
}

.sheet-tab {
  width: 159px;
  background: #222;
  color: #777;
  font: 24px "Liberation Sans", sans-serif;
  padding-top: 11px;
  text-align: center;
  border-right: 2px solid #555;
  height: 50px;
}

.sheet-tab.active {
  background: #fff;
  color: #3d8a57;
  font-weight: bold;
  height: 43px;
  width: 156px;
  margin-top: -2px;
  padding-top: 13px;
  border: none;
  border-bottom: 2px solid #777;
  border-radius: 0 0 8px 8px;
}

.sheet-add {
  width: 76px;
  text-align: center;
  font: bold 34px "Liberation Sans", sans-serif;
  color: #aaa;
  line-height: 42px;
  height: 42px;
  border-right: 2px solid #555;
}

.statusbar {
  height: 45px;
  display: flex;
  align-items: center;
  padding-left: 49px;
  background: linear-gradient(#4a4a4a, #3c3c3c);
  font-size: 24px;
  font-weight: 300;
  color: #eee;
}

.a11y {
  margin-left: 40px;
}

.a11y-text {
  margin-left: 7px;
}

.status-right {
  margin-left: auto;
  height: 100%;
  padding-right: 50px;
  display: flex;
  align-items: center;
}

.view-btn {
  width: 70px;
  height: 100%;
  margin-left: 1px;
  display: flex;
  align-items: center;
  justify-content: center;
}

.view-btn.on {
  width: 74px;
  background: #5a5a5a;
}

.zoom-minus {
  margin-left: 15px;
}

.slider {
  width: 200px;
  height: 10px;
  margin: 0 13px 0 14px;
  border-radius: 5px;
  background: #7c7c7c;
  display: flex;
  align-items: center;
}

.thumb {
  width: 32px;
  height: 32px;
  margin-left: 95px;
  border-radius: 50%;
  background: #9e9e9e;
}

.zoom-pct {
  margin-left: 34px;
}
```
